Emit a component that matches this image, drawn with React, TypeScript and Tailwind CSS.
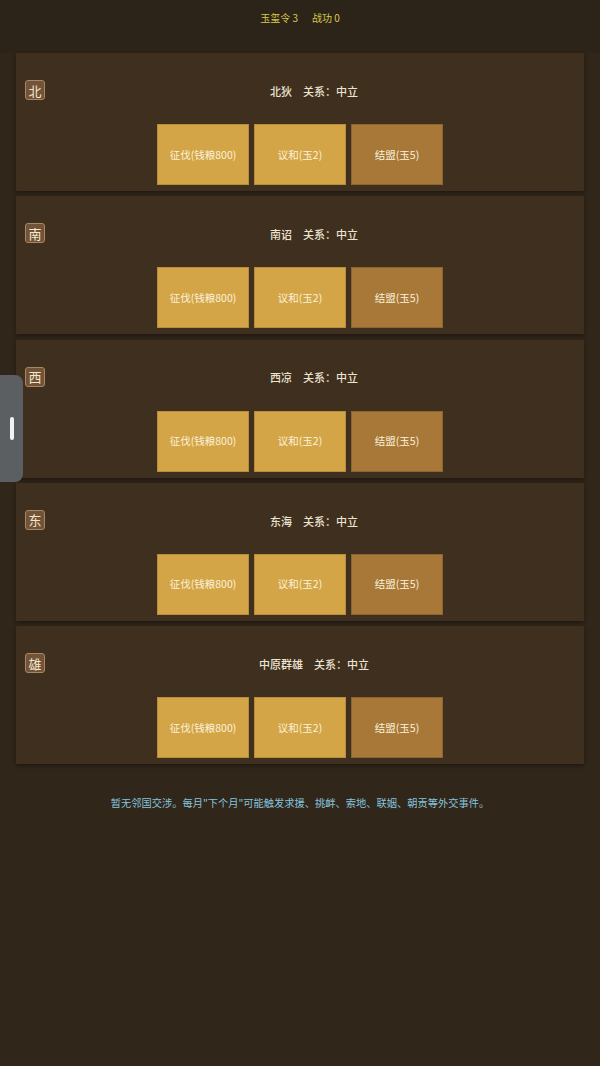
import React from 'react'

interface Nation {
  badge: string
  name: string
  relation: string
}

const nations: Nation[] = [
  { badge: '北', name: '北狄', relation: '中立' },
  { badge: '南', name: '南诏', relation: '中立' },
  { badge: '西', name: '西凉', relation: '中立' },
  { badge: '东', name: '东海', relation: '中立' },
  { badge: '雄', name: '中原群雄', relation: '中立' },
]

const font = { fontFamily: '"Noto Sans CJK SC", "Noto Sans", sans-serif' }

const NationCard: React.FC<{ nation: Nation }> = ({ nation }) => (
  <div className="h-[138px] bg-[#3e2f1e] px-[9px] pt-[27px] pb-[6px] shadow-[0_2px_4px_rgba(0,0,0,0.35)]">
    <div className="flex h-5 items-center">
      <div className="flex h-5 w-5 items-center justify-center rounded-[3px] border border-[#a88563] bg-[#725338] text-[13px] leading-none text-[#f4e6cc]">
        {nation.badge}
      </div>
      <div className="ml-2 mt-[2px] flex-1 text-center text-[11px] font-medium text-[#ece3d2]">
        {nation.name}
        <span className="ml-[11px]">关系：{nation.relation}</span>
      </div>
    </div>
    <div className="mt-6 flex justify-center gap-[5px]">
      <button className="h-[61px] w-[92px] border border-[#b88d3c] bg-[#d3a546] text-[10.5px] text-[#fbf1dc]">
        征伐(钱粮800)
      </button>
      <button className="h-[61px] w-[92px] border border-[#b88d3c] bg-[#d3a546] text-[10.5px] text-[#fbf1dc]">
        议和(玉2)
      </button>
      <button className="h-[61px] w-[92px] border border-[#8e6430] bg-[#a87839] text-[10.5px] text-[#fbf1dc]">
        结盟(玉5)
      </button>
    </div>
  </div>
)

export default function App() {
  return (
    <div className="relative min-h-[1066px] w-full bg-[#30261a]" style={font}>
      <div className="flex h-[53px] justify-center bg-[#2c2418] pt-[10px]">
        <span className="text-[10px] text-[#dcc84c]">
          玉玺令 3<span className="ml-[14px]">战功 0</span>
        </span>
      </div>
      <div className="flex flex-col gap-[5.25px] px-4">
        {nations.map((n) => (
          <NationCard key={n.badge} nation={n} />
        ))}
      </div>
      <p className="mt-[31px] text-center text-[10.25px] text-[#86c3df]">
        暂无邻国交涉。每月"下个月"可能触发求援、挑衅、索地、联姻、朝贡等外交事件。
      </p>

      <div className="absolute left-0 top-[375px] flex h-[107px] w-[23px] items-center justify-center rounded-r-[8px] bg-[#5b5f62]">
        <div className="h-[23px] w-[4px] rounded-full bg-[#f2f2f2]" />
      </div>
    </div>
  )
}
